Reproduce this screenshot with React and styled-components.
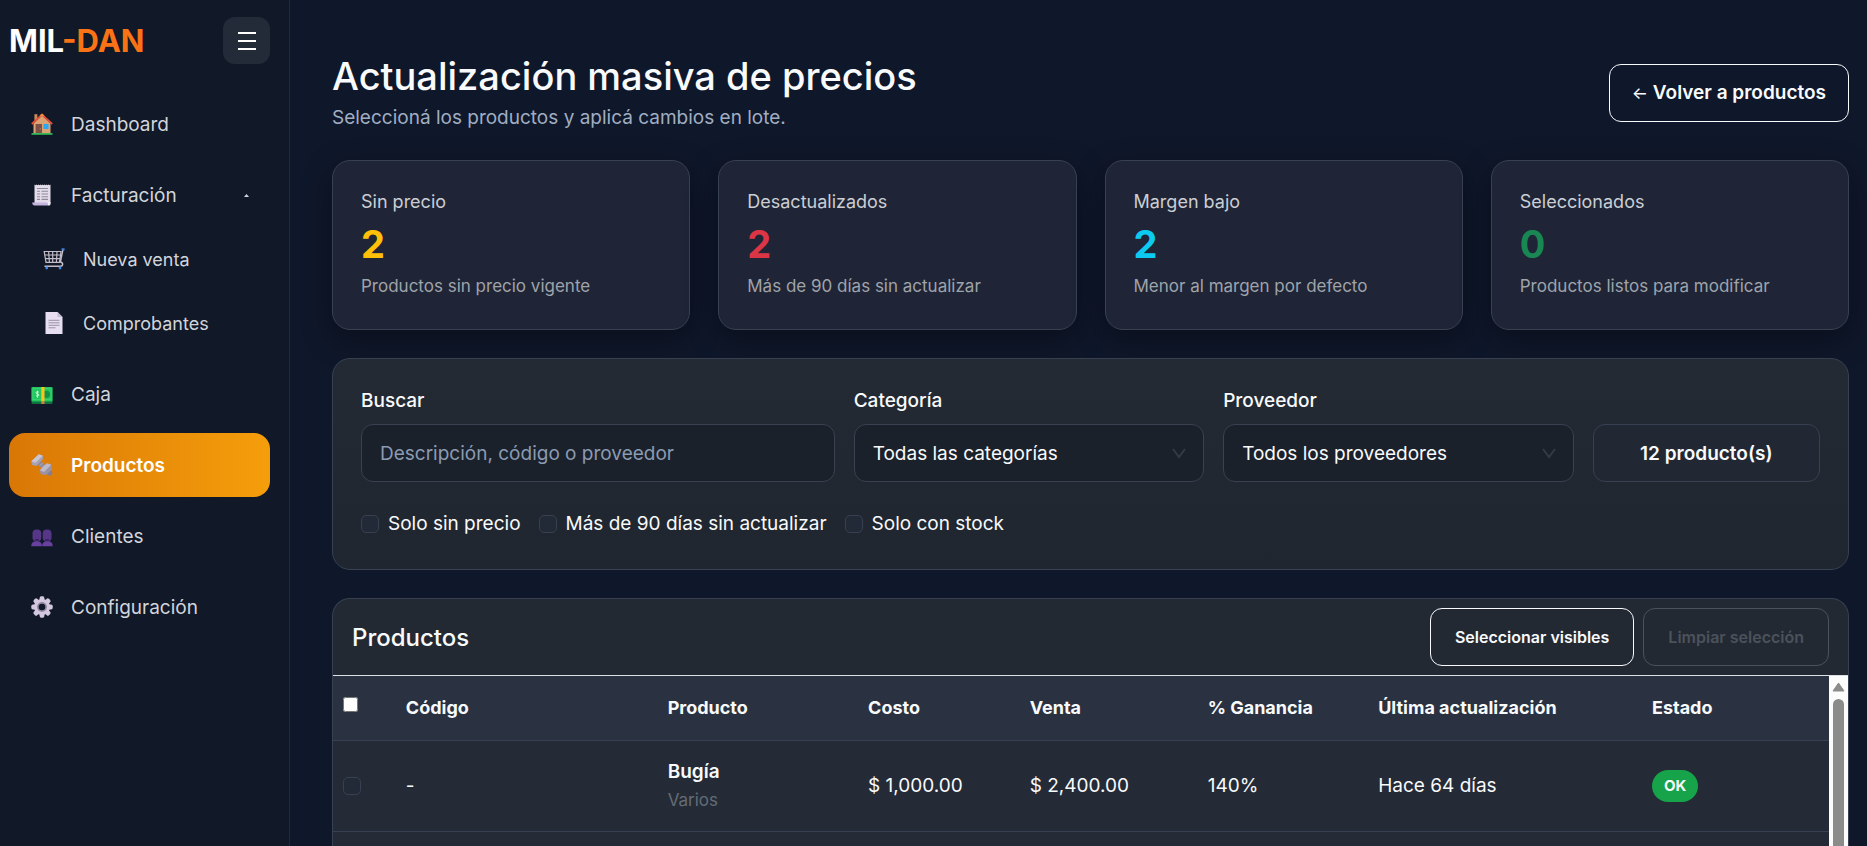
import { useState } from 'react'
import styled, { createGlobalStyle } from 'styled-components'

const GlobalStyle = createGlobalStyle`
  *, *::before, *::after {
    box-sizing: border-box;
  }
  body {
    margin: 0;
    background: #0f172a;
    color: #f8fafc;
    font-family: Inter, 'Liberation Sans', sans-serif;
    font-size: 19px;
    line-height: 29px;
  }
  button, input, select {
    font: inherit;
    color: inherit;
  }
  h1, h2, p {
    margin: 0;
  }
`

/* ---------- icons ---------- */

const HouseIcon = () => (
  <svg viewBox='0 0 22 22' aria-hidden='true'>
    <rect x='3.4' y='1.2' width='3' height='7' fill='#c98a5b' />
    <path d='M2.5 10.5 11 2.6l8.5 7.9v10h-17z' fill='#dba274' />
    <path d='M.8 11 11 1.6 21.2 11' fill='none' stroke='#e5503b' strokeWidth='1.8' />
    <path d='M9.2 3.2 11 1.6l1.8 1.6' fill='none' stroke='#f98a3c' strokeWidth='1.8' />
    <rect x='4.6' y='11' width='6.4' height='9.5' fill='#7d5148' />
    <circle cx='9.3' cy='15.8' r='.6' fill='#c98a5b' />
    <rect x='12.5' y='11' width='5' height='5' fill='#29a9f5' />
    <rect x='.5' y='20.2' width='21' height='1.5' fill='#2fd05c' />
  </svg>
)

const ReceiptIcon = () => (
  <svg viewBox='0 0 22 22' aria-hidden='true'>
    <path
      d='M3.5.5l1 .8 1-.8 1 .8 1-.8 1 .8 1-.8 1 .8 1-.8 1 .8 1-.8 1 .8 1-.8 1 .8 1-.8 1 .8 1-.8V19.5H3.5z'
      fill='#e3dcea'
    />
    <path d='M1.2 18.6h15c0 1.7 1 2.9 2 2.9H3.6c-1.600 0-2.400-1.300-2.400-2.900z' fill='#c5b4de' />
    <path d='M19.5 18v2a1.5 1.5 0 0 1-3 0v-2z' fill='#f2ecf7' />
    <path
      d='M6 4.5h11M6 7.3h3M10.5 7.3H17M6 10h3M10.5 10H17M6 12.7h3M10.5 12.7H17M6 15.4h3M10.5 15.4H17'
      stroke='#8f8898'
      strokeWidth='1.1'
    />
  </svg>
)

const CartIcon = () => (
  <svg viewBox='0 0 22 22' aria-hidden='true'>
    <g fill='none' stroke='#c3bdc8' strokeWidth='1.2'>
      <path d='M1.200 3.500H18L16.500 14.300H3z' />
      <path d='M1.800 7h15.500M2.400 10.600h14.500M5.600 3.500l.8 10.800M9.700 3.500v10.800M14 3.500l-.6 10.800' />
      <path d='M20 1.400 17.300 14c3 .5 3.200 4.200 0 4.200H1.500' strokeWidth='1.5' />
    </g>
    <path d='M18.600 1.300h3' stroke='#3e86e0' strokeWidth='2' />
    <circle cx='3.7' cy='20' r='1.4' fill='#3e86e0' />
    <circle cx='17' cy='20' r='1.4' fill='#3e86e0' />
  </svg>
)

const PageIcon = () => (
  <svg viewBox='0 0 22 22' aria-hidden='true'>
    <path d='M2.5 0h12l5 5v17h-17z' fill='#e8def2' />
    <path d='M14.5 0l5 5h-5z' fill='#c4b9d2' />
    <path d='M5.5 8.3h11M5.5 10.8h11M5.5 13.3h11M5.5 15.8h7' stroke='#9a92a5' strokeWidth='1' />
  </svg>
)

const MoneyIcon = () => (
  <svg viewBox='0 0 22 22' aria-hidden='true'>
    <rect x='.5' y='4' width='21' height='17' rx='1' fill='#11703f' />
    <rect x='.5' y='4' width='21' height='14.5' rx='1' fill='#22c55e' />
    <rect x='2' y='5.8' width='18' height='11' fill='none' stroke='#4ade80' strokeWidth='.6' />
    <circle cx='15.5' cy='11.3' r='3.6' fill='#12914a' />
    <path
      d='M7.8 9.2c-.6-.8-2.800-.7-2.800.6 0 1.400 2.900.7 2.900 2.200 0 1.400-2.500 1.400-3 .3M6.4 7.7v7'
      fill='none'
      stroke='#d7f7df'
      strokeWidth='.9'
    />
    <rect x='10.3' y='4' width='3.2' height='14.5' fill='#fbc31c' />
    <rect x='10.3' y='18.5' width='3.2' height='2.5' fill='#c98540' />
  </svg>
)

const BoltIcon = () => (
  <svg viewBox='0 0 22 22' aria-hidden='true'>
    <path d='M7 7.5 19.5 20' stroke='#8d8798' strokeWidth='4.600' />
    <path d='M8.5 12l3.5-3.5M10.5 14l3.5-3.5' stroke='#b9b4c2' strokeWidth='.9' />
    <path d='M.3 7.2 7.8.3l4 1.400.2 3.600L5.3 12 1.2 11z' fill='#a8a1b2' />
    <path d='M.3 7.2 7.8.3l4 1.400-7.400 7.100z' fill='#cbc5d2' />
    <path d='M8.7 16.2 16 9.2l4.3 1.5.5 4.5-6.200 6-5-1.300z' fill='#9a93a6' />
    <path d='M8.7 16.2 16 9.2l4.3 1.5-7.200 7.200z' fill='#bfb8c8' />
    <path d='M16.3 20.5l4-4 1.4 3-2.300 2.200z' fill='#857e92' />
  </svg>
)

const PeopleIcon = () => (
  <svg viewBox='0 0 22 22' aria-hidden='true'>
    <rect x='1.500' y='4.500' width='8.800' height='12' rx='4' fill='#563686' />
    <rect x='11.700' y='4.500' width='8.800' height='12' rx='4' fill='#563686' />
    <path d='M3.800 14h4.200v2.500H3.800zM14 14h4.200v2.500H14z' fill='#3d2466' />
    <path d='M.3 21.300c0-3.400 1.500-5 5.400-5s5.200 1.600 5.200 5zM11.200 21.300c0-3.400 1.500-5 5.200-5s5.300 1.600 5.300 5z' fill='#68419f' />
  </svg>
)

const GearIcon = () => (
  <svg viewBox='0 0 22 22' aria-hidden='true'>
    <g fill='#d3c8e0'>
      {[0, 45, 90, 135].map((angle) => (
        <rect key={angle} x='8.6' y='.3' width='4.8' height='21.4' rx='1.6' transform={`rotate(${angle} 11 11)`} />
      ))}
      <circle cx='11' cy='11' r='8' />
    </g>
    <circle cx='11' cy='11' r='5' fill='#948ba1' />
    <circle cx='11' cy='11' r='3.3' fill='#111827' />
  </svg>
)

const Chevron = () => (
  <svg width='14' height='12' viewBox='0 0 14 12' aria-hidden='true'>
    <path d='M1 2l6 8 6-8' fill='none' stroke='#343a40' strokeWidth='2' />
  </svg>
)

/* ---------- data ---------- */

const menu = [
  { label: 'Dashboard', Icon: HouseIcon },
  {
    label: 'Facturación',
    Icon: ReceiptIcon,
    children: [
      { label: 'Nueva venta', Icon: CartIcon },
      { label: 'Comprobantes', Icon: PageIcon },
    ],
  },
  { label: 'Caja', Icon: MoneyIcon },
  { label: 'Productos', Icon: BoltIcon, active: true },
  { label: 'Clientes', Icon: PeopleIcon },
  { label: 'Configuración', Icon: GearIcon },
]

const stats = [
  { label: 'Sin precio', value: 2, hint: 'Productos sin precio vigente', color: '#ffc107' },
  { label: 'Desactualizados', value: 2, hint: 'Más de 90 días sin actualizar', color: '#dc3545' },
  { label: 'Margen bajo', value: 2, hint: 'Menor al margen por defecto', color: '#0dcaf0' },
  { label: 'Seleccionados', value: 0, hint: 'Productos listos para modificar', color: '#198754' },
]

const filters = [
  { id: 'sinPrecio', label: 'Solo sin precio' },
  { id: 'vencidos', label: 'Más de 90 días sin actualizar' },
  { id: 'conStock', label: 'Solo con stock' },
]

const columns = [
  { label: 'Código', share: 17.5 },
  { label: 'Producto', share: 13.4 },
  { label: 'Costo', share: 10.8 },
  { label: 'Venta', share: 11.9 },
  { label: '% Ganancia', share: 11.4 },
  { label: 'Última actualización', share: 18.3 },
  { label: 'Estado', share: 12.5 },
]

const products = [
  {
    id: 1,
    codigo: '-',
    nombre: 'Bugía',
    categoria: 'Varios',
    costo: '$ 1,000.00',
    venta: '$ 2,400.00',
    ganancia: '140%',
    actualizado: 'Hace 64 días',
    estado: 'OK',
  },
]

/* ---------- app ---------- */

const Sidebar = () => {
  const [open, setOpen] = useState(true)

  return (
    <Aside>
      <Brand>
        <Logo>
          MIL<span>-DAN</span>
        </Logo>
        <MenuButton type='button' aria-label='Menú'>
          <svg width='18' height='18' viewBox='0 0 18 18' aria-hidden='true'>
            <path d='M0 1h18M0 9h18M0 17h18' stroke='#fff' strokeWidth='2' />
          </svg>
        </MenuButton>
      </Brand>
      <Nav>
        {menu.map(({ label, Icon, active, children }) =>
          children ? (
            <div key={label}>
              <NavItem as='button' type='button' aria-expanded={open} onClick={() => setOpen(!open)}>
                <Icon />
                {label}
                <Caret viewBox='0 0 5 3' aria-hidden='true'>
                  <path d='M0 3 2.5 0 5 3z' fill='#cbd5e1' />
                </Caret>
              </NavItem>
              {open &&
                children.map((child) => (
                  <NavItem key={child.label} href='#' $nested>
                    <child.Icon />
                    {child.label}
                  </NavItem>
                ))}
            </div>
          ) : (
            <NavItem key={label} href='#' $active={active}>
              <Icon />
              {label}
            </NavItem>
          )
        )}
      </Nav>
    </Aside>
  )
}

const SelectField = ({ id, label, option }) => (
  <Field $span={3}>
    <label htmlFor={id}>{label}</label>
    <SelectWrap>
      <Select id={id}>
        <option>{option}</option>
      </Select>
      <Chevron />
    </SelectWrap>
  </Field>
)

const App = () => {
  return (
    <Layout>
      <GlobalStyle />
      <Sidebar />
      <Main>
        <PageHeader>
          <div>
            <Title>Actualización masiva de precios</Title>
            <Subtitle>Seleccioná los productos y aplicá cambios en lote.</Subtitle>
          </div>
          <OutlineButton type='button'>
            <Arrow>←</Arrow> Volver a productos
          </OutlineButton>
        </PageHeader>

        <Stats>
          {stats.map(({ label, value, hint, color }) => (
            <StatCard key={label}>
              <StatLabel>{label}</StatLabel>
              <StatValue $color={color}>{value}</StatValue>
              <StatHint>{hint}</StatHint>
            </StatCard>
          ))}
        </Stats>

        <FilterCard>
          <FilterGrid>
            <Field $span={4}>
              <label htmlFor='buscar'>Buscar</label>
              <Input id='buscar' type='text' placeholder='Descripción, código o proveedor' />
            </Field>
            <SelectField id='categoria' label='Categoría' option='Todas las categorías' />
            <SelectField id='proveedor' label='Proveedor' option='Todos los proveedores' />
            <Count>12 producto(s)</Count>
          </FilterGrid>
          <Checks>
            {filters.map(({ id, label }) => (
              <Check key={id} htmlFor={id}>
                <Checkbox id={id} type='checkbox' />
                {label}
              </Check>
            ))}
          </Checks>
        </FilterCard>

        <TableCard>
          <TableHeader>
            <h2>Productos</h2>
            <Actions>
              <OutlineButton type='button' $small>
                Seleccionar visibles
              </OutlineButton>
              <OutlineButton type='button' $small disabled>
                Limpiar selección
              </OutlineButton>
            </Actions>
          </TableHeader>
          <TableArea>
            <TableScroll>
              <Table>
                <colgroup>
                  <Col $share={4.2} />
                  {columns.map(({ label, share }) => (
                    <Col key={label} $share={share} />
                  ))}
                </colgroup>
                <thead>
                  <tr>
                    <th>
                      <HeadCheckbox type='checkbox' aria-label='Seleccionar todos' />
                    </th>
                    {columns.map(({ label }) => (
                      <th key={label}>{label}</th>
                    ))}
                  </tr>
                </thead>
                <tbody>
                  {products.map((p) => (
                    <tr key={p.id}>
                      <td>
                        <Checkbox type='checkbox' aria-label={p.nombre} />
                      </td>
                      <td>{p.codigo}</td>
                      <td>
                        <ProductName>{p.nombre}</ProductName>
                        <ProductCategory>{p.categoria}</ProductCategory>
                      </td>
                      <td>{p.costo}</td>
                      <td>{p.venta}</td>
                      <td>{p.ganancia}</td>
                      <td>{p.actualizado}</td>
                      <td>
                        <Status>{p.estado}</Status>
                      </td>
                    </tr>
                  ))}
                </tbody>
              </Table>
            </TableScroll>
            <ScrollTrack>
              <svg width='13' height='10' viewBox='0 0 13 10' aria-hidden='true'>
                <path d='M6.5 1 12 9H1z' fill='#8b8b8b' stroke='#8b8b8b' strokeLinejoin='round' />
              </svg>
              <ScrollThumb />
            </ScrollTrack>
          </TableArea>
        </TableCard>
      </Main>
    </Layout>
  )
}

const Layout = styled.div`
  display: flex;
  height: 100vh;
  overflow: hidden;
`

const Aside = styled.aside`
  flex: 0 0 290px;
  padding: 17px 19px 17px 9px;
  background: #111827;
  border-right: 1px solid #1f2937;
`

const Brand = styled.div`
  display: flex;
  align-items: center;
  justify-content: space-between;
  margin-bottom: 28px;
`

const Logo = styled.div`
  font-size: 31px;
  font-weight: 700;
  line-height: 46px;
  color: #fff;

  span {
    color: #f97316;
  }
`

const MenuButton = styled.button`
  display: grid;
  place-items: center;
  width: 47px;
  height: 47px;
  padding: 0;
  border: 0;
  border-radius: 12px;
  background: #242b38;
`

const Nav = styled.nav`
  display: flex;
  flex-direction: column;
  gap: 7px;
`

const NavItem = styled.a`
  display: flex;
  align-items: center;
  gap: 18px;
  width: 100%;
  height: 64px;
  padding: 0 21px 0 ${({ $nested }) => ($nested ? 34 : 22)}px;
  border: 0;
  border-radius: 16px;
  background: ${({ $active }) => ($active ? 'linear-gradient(90deg, #d97706, #f59e0b)' : 'none')};
  color: ${({ $active }) => ($active ? '#fff' : '#d1d5db')};
  font-size: ${({ $nested }) => ($nested ? 18 : 19)}px;
  font-weight: ${({ $active }) => ($active ? 600 : 400)};
  text-align: left;
  text-decoration: none;

  > svg:first-child {
    flex: none;
    width: 22px;
    height: 22px;
  }
`

const Caret = styled.svg`
  width: 5px;
  height: 3px;
  margin-left: auto;
`

const Main = styled.main`
  flex: 1;
  min-width: 0;
  display: flex;
  flex-direction: column;
  gap: 28px;
  padding: 53px 18px 0 42px;
`

const PageHeader = styled.header`
  display: flex;
  align-items: center;
  justify-content: space-between;
`

const Title = styled.h1`
  margin-bottom: 4px;
  font-size: 38px;
  font-weight: 500;
  line-height: 46px;
`

const Subtitle = styled.p`
  color: #a0aec3;
`

const OutlineButton = styled.button`
  height: 58px;
  padding: 0 ${({ $small }) => ($small ? 24 : 22)}px;
  border: 1px solid #f8fafc;
  border-radius: 12px;
  background: none;
  font-size: ${({ $small }) => ($small ? 16 : 19)}px;
  font-weight: 600;

  &:disabled {
    border-color: #4b525c;
    color: #4b525c;
  }
`

const Arrow = styled.span`
  font-size: 17px;
  font-weight: 400;
`

const Stats = styled.section`
  display: grid;
  grid-template-columns: repeat(4, minmax(0, 1fr));
  gap: 28px;
`

const StatCard = styled.article`
  display: flex;
  flex-direction: column;
  gap: 6px;
  padding: 28px 28px 30px;
  border: 1px solid #374151;
  border-radius: 18px;
  background: #1f2536;
  box-shadow: 0 10px 30px rgba(0, 0, 0, 0.35);
  line-height: 26px;
`

const StatLabel = styled.p`
  font-size: 18px;
  color: #cbced4;
`

const StatValue = styled.p`
  font-size: 38px;
  font-weight: 700;
  line-height: 46px;
  color: ${({ $color }) => $color};
`

const StatHint = styled.p`
  font-size: 17px;
  color: #9fa3aa;
`

const FilterCard = styled.section`
  padding: 29px 28px 31px;
  border: 1px solid #374151;
  border-radius: 18px;
  background: linear-gradient(180deg, #232a33, #20262f);
`

const FilterGrid = styled.div`
  display: grid;
  grid-template-columns: repeat(12, minmax(0, 1fr));
  align-items: end;
  gap: 19px;
`

const Field = styled.div`
  grid-column: span ${({ $span }) => $span};

  label {
    display: block;
    margin-bottom: 10px;
    line-height: 26px;
    font-weight: 500;
  }
`

const Input = styled.input`
  display: block;
  width: 100%;
  height: 58px;
  padding: 0 18px;
  border: 1px solid #3a4150;
  border-radius: 12px;
  background: #1b212b;

  &::placeholder {
    color: #8a9bb2;
  }
`

const SelectWrap = styled.div`
  display: grid;
  align-items: center;

  > * {
    grid-area: 1 / 1;
  }
  svg {
    justify-self: end;
    margin-right: 18px;
    pointer-events: none;
  }
`

const Select = styled(Input).attrs({ as: 'select' })`
  appearance: none;
`

const Count = styled.div`
  grid-column: span 2;
  display: grid;
  place-items: center;
  height: 58px;
  border: 1px solid #374151;
  border-radius: 12px;
  background: #222833;
  font-weight: 600;
`

const Checks = styled.div`
  display: flex;
  flex-wrap: wrap;
  gap: 18px;
  margin-top: 27px;
`

const Check = styled.label`
  display: flex;
  align-items: center;
  gap: 9px;
`

const Checkbox = styled.input`
  appearance: none;
  display: block;
  width: 18px;
  height: 18px;
  margin: 0;
  border: 1px solid #374151;
  border-radius: 5px;
  background: #232a37;

  &:checked {
    background: #f59e0b;
  }
`

const HeadCheckbox = styled.input`
  display: block;
  width: 15px;
  height: 15px;
  margin: 0 0 6px;
`

const TableCard = styled.section`
  flex: 1;
  min-height: 0;
  display: flex;
  flex-direction: column;
  overflow: hidden;
  border: 1px solid #374151;
  border-bottom: 0;
  border-radius: 18px 18px 0 0;
  background: #232932;
`

const TableHeader = styled.div`
  display: flex;
  align-items: center;
  justify-content: space-between;
  padding: 9px 19px;
  border-bottom: 1px solid #dee2e6;

  h2 {
    font-size: 24px;
    font-weight: 500;
  }
`

const Actions = styled.div`
  display: flex;
  gap: 9px;
`

const TableArea = styled.div`
  flex: 1;
  min-height: 0;
  display: flex;
`

const TableScroll = styled.div`
  flex: 1;
  min-width: 0;
  overflow: hidden;
  background: #242b36;
`

const Table = styled.table`
  width: 100%;
  table-layout: fixed;
  border-collapse: collapse;

  th, td {
    padding: 0 10px;
    border-bottom: 1px solid #374151;
    text-align: left;
  }
  th {
    height: 64px;
    background: #2a3140;
    font-size: 18px;
    font-weight: 700;
  }
  td {
    height: 91px;
  }
`

const Col = styled.col`
  width: ${({ $share }) => $share}%;
`

const ProductName = styled.div`
  font-weight: 600;
`

const ProductCategory = styled.div`
  font-size: 17px;
  color: #646b75;
`

const Status = styled.span`
  display: inline-block;
  padding: 0 12px;
  border-radius: 16px;
  background: #16a34a;
  font-size: 15px;
  font-weight: 700;
  line-height: 32px;
`

const ScrollTrack = styled.div`
  flex: 0 0 19px;
  display: flex;
  flex-direction: column;
  align-items: center;
  gap: 7px;
  padding-top: 6px;
  background: #fcfcfc;
`

const ScrollThumb = styled.div`
  flex: 1;
  width: 11px;
  border-radius: 6px 6px 0 0;
  background: #8b8b8b;
`

export default App
